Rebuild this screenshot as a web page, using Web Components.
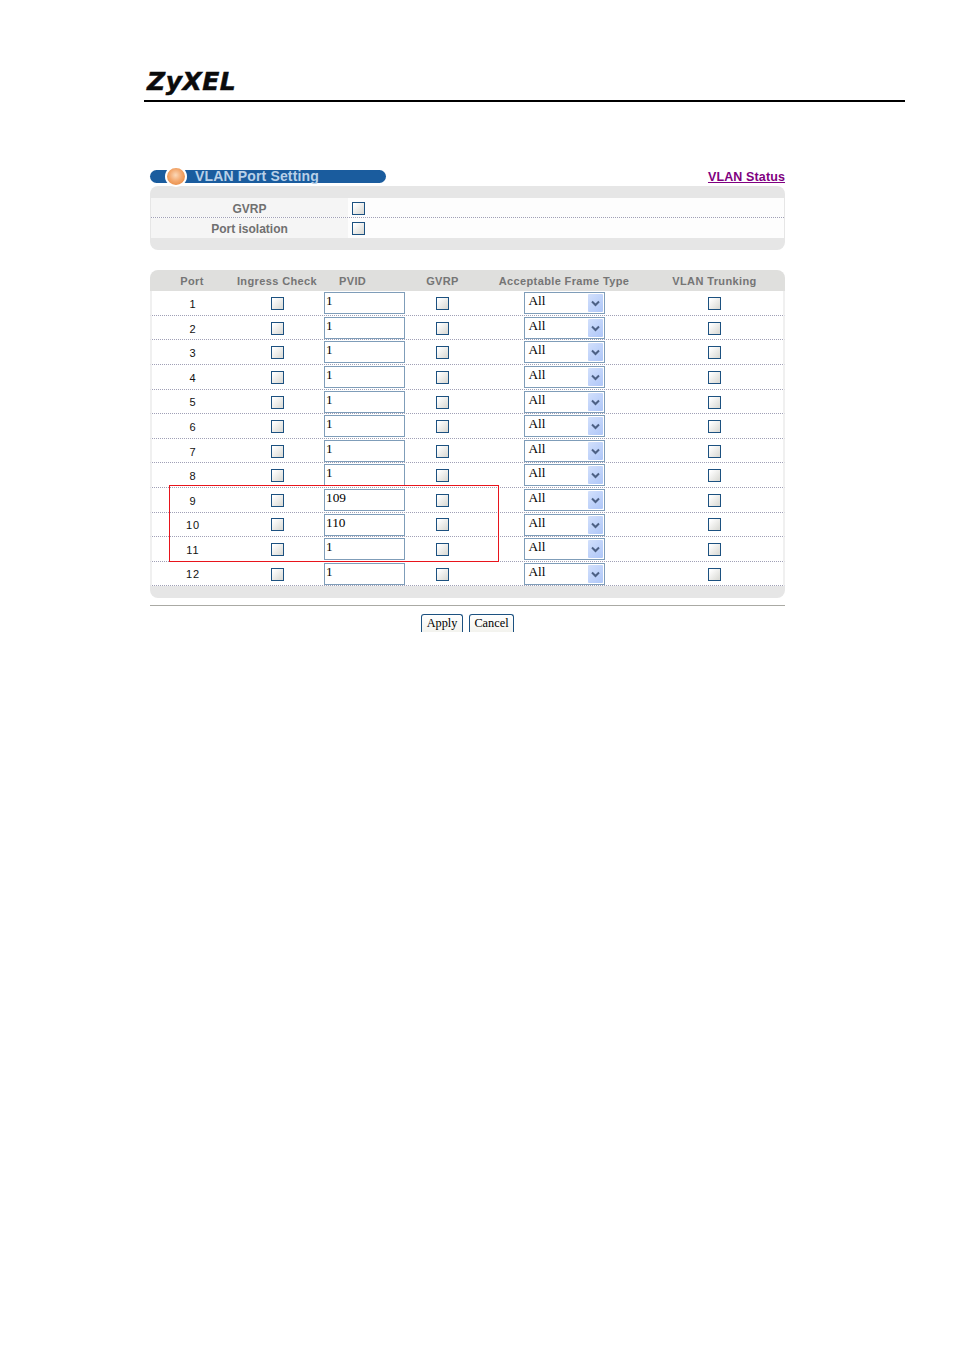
<!DOCTYPE html>
<html lang="en"><head><meta charset="utf-8"><title>VLAN Port Setting</title>
<style>
html,body{margin:0;padding:0;background:#fff}
body{width:954px;height:1350px;overflow:hidden;font-family:"Liberation Sans",Arial,sans-serif}
</style></head><body>
<zy-page>
  <zy-header slot="header"></zy-header>
  <zy-titlebar slot="title" label="VLAN Port Setting" link="VLAN Status"></zy-titlebar>
  <zy-global-panel slot="global">
    <zy-global-row label="GVRP" line></zy-global-row>
    <zy-global-row label="Port isolation"></zy-global-row>
  </zy-global-panel>
  <zy-port-table slot="table">
    <zy-port-row port="1" pvid="1" h="25"></zy-port-row>
    <zy-port-row port="2" pvid="1" h="24"></zy-port-row>
    <zy-port-row port="3" pvid="1" h="25"></zy-port-row>
    <zy-port-row port="4" pvid="1" h="25"></zy-port-row>
    <zy-port-row port="5" pvid="1" h="24" tight></zy-port-row>
    <zy-port-row port="6" pvid="1" h="25"></zy-port-row>
    <zy-port-row port="7" pvid="1" h="24"></zy-port-row>
    <zy-port-row port="8" pvid="1" h="25"></zy-port-row>
    <zy-port-row port="9" pvid="109" h="25"></zy-port-row>
    <zy-port-row port="10" pvid="110" h="24" tight></zy-port-row>
    <zy-port-row port="11" pvid="1" h="25"></zy-port-row>
    <zy-port-row port="12" pvid="1" h="24" tight></zy-port-row>
    <zy-highlight slot="overlay"></zy-highlight>
  </zy-port-table>
  <zy-actions slot="actions"></zy-actions>
</zy-page>
<script>
const define=(name,css,html,init)=>{
  customElements.define(name,class extends HTMLElement{
    connectedCallback(){
      if(this.shadowRoot)return;
      const r=this.attachShadow({mode:'open'});
      r.innerHTML=`<style>${css}</style>`+(typeof html==='function'?html(this):html);
      if(init)init(this);
    }
  });
};
define('zy-page',`:host{display:block;width:954px;height:1350px;box-sizing:border-box;padding-top:64px}
.body{margin-left:150px;width:635px;display:block}
::slotted([slot=title]){margin-top:68px}
::slotted([slot=table]){margin-top:20px}`,
`<slot name="header"></slot><div class="body"><slot name="title"></slot><slot name="global"></slot><slot name="table"></slot><slot name="actions"></slot></div>`);

define('zy-header',`:host{display:block;margin-left:144px;width:761px;height:36px;border-bottom:2px solid #000;box-sizing:content-box}
.logo{display:block;font:italic bold 25px/36px "DejaVu Sans",sans-serif;color:#0b0b0b;margin-left:3px;-webkit-text-stroke:.5px #0b0b0b;letter-spacing:.5px}`,
`<span class="logo">ZyXEL</span>`);

define('zy-titlebar',`:host{display:flex;justify-content:space-between;align-items:flex-start;height:16px}
.bar{position:relative;width:236px;height:13px;background:#1a5c9e;border-radius:7px;display:flex;align-items:center;box-sizing:border-box;padding-left:45px}
.orb{position:absolute;left:15px;top:-4px;width:18px;height:17px;border-radius:50%;background:radial-gradient(circle at 48% 42%,#fbd8b8 0%,#f3a86e 45%,#e27c2e 100%);border:2px solid #fff;box-sizing:content-box}
.t{font:bold 14px/13px "Liberation Sans",sans-serif;letter-spacing:.15px;color:#b8d0e8;white-space:nowrap}
a{font:bold 12.5px/14px "Liberation Sans",sans-serif;color:#800080;text-decoration:underline;white-space:nowrap;letter-spacing:.12px}`,
h=>`<div class="bar"><span class="orb"></span><span class="t">${h.getAttribute('label')}</span></div><a href="#">${h.getAttribute('link')}</a>`);

define('zy-check',`:host{display:block;width:13px;height:13px;box-sizing:border-box;border:1px solid #1c5180;background:linear-gradient(135deg,#fff 10%,#dcdcd7 90%)}`,``);

define('zy-global-panel',`:host{display:block;width:635px;border-radius:8px;overflow:hidden;background:#e6e6e6;padding:12px 0}
.in{display:block;margin:0 1px 0 1px}`,`<div class="in"><slot></slot></div>`);

define('zy-global-row',`:host{display:flex;background:#fdfdfd;height:20px;box-sizing:border-box;font:bold 12px/20px "Liberation Sans",sans-serif;color:#707070}
:host([line]){border-bottom:1px dotted #a0a0b6}
.l{width:197px;background:#f5f5f5;text-align:center;flex:none}
.l span{display:block;padding-top:1px}
.c{padding:4px 0 0 4px}`,
h=>`<div class="l"><span>${h.getAttribute('label')}</span></div><div class="c"><zy-check></zy-check></div>`);

const cols='82px 86px 85px 75px 168px 133px';
const headCols='84px 86px 85px 75px 168px 133px';
define('zy-port-table',`:host{display:block;position:relative;width:635px}
.head{display:grid;grid-template-columns:${headCols};height:21px;background:#dfdfdd;border-radius:8px 8px 0 0;font:bold 11px/22px "Liberation Sans",sans-serif;letter-spacing:.38px;color:#757575;text-align:center}
.head div{white-space:nowrap}
.head .pv{text-align:left;padding-left:19px}
.foot{height:12px;background:#e6e6e6;border-radius:0 0 8px 8px}
.rows{display:block}`,
`<div class="head"><div>Port</div><div>Ingress Check</div><div class="pv">PVID</div><div>GVRP</div><div>Acceptable Frame Type</div><div>VLAN Trunking</div></div><div class="rows"><slot></slot></div><div class="foot"></div><slot name="overlay"></slot>`);

define('zy-port-row',`:host{display:grid;grid-template-columns:${cols};align-items:start;box-sizing:border-box;width:635px;border-left:2px solid #f0f0f0;border-right:2px solid #f0f0f0;border-bottom:1px dotted #a0a0b6;font:11px/16px "Liberation Sans",sans-serif;color:#111;letter-spacing:1px}
.p{text-align:center;padding-top:5px}
:host([tight]) .p{padding-top:4px}
.cb{display:flex;justify-content:center;padding-top:6px}
:host([port="10"]) .cb{padding-top:5px}
.in{padding-top:1px;padding-left:4px}
.sel{display:flex;justify-content:center;padding-top:1px}
.box{box-sizing:border-box;width:81px;height:22px;border:1px solid #7f9db9;background:#fff;font:13.3px/16px "Liberation Serif",serif;letter-spacing:0;color:#000;padding-left:1px}
.s{display:flex;justify-content:space-between;padding-left:4px}
.s b{font-weight:400}
.btn{width:15px;height:18px;margin:1px 1px 0 0;background:linear-gradient(135deg,#d2e0fc,#aec6f8);border-radius:1px;display:flex;align-items:center;justify-content:center}`,
h=>`<div class="p">${h.getAttribute('port')}</div><div class="cb"><zy-check></zy-check></div><div class="in"><div class="box">${h.getAttribute('pvid')}</div></div><div class="cb"><zy-check></zy-check></div><div class="sel"><div class="box s"><b>All</b><span class="btn"><svg width="9" height="7" viewBox="0 0 9 7"><path d="M1 1.5L4.5 5L8 1.5" fill="none" stroke="#4d6185" stroke-width="2"/></svg></span></div></div><div class="cb"><zy-check></zy-check></div>`,
h=>{h.style.height=h.getAttribute('h')+'px'});

define('zy-highlight',`:host{display:block;position:absolute;left:19px;top:215px;width:330px;height:77px;box-sizing:border-box;border:1px solid #e8141c;pointer-events:none}`,``);

define('zy-actions',`:host{display:flex;justify-content:center;border-top:1px solid #aaaaa4;margin-top:7px;padding-top:8px;width:635px;box-sizing:border-box}
.bt{box-sizing:border-box;height:18px;border:1px solid #1c5180;border-bottom:0;border-radius:3px 3px 0 0;background:linear-gradient(#fff,#f3f3ee);font:12.3px/16px "Liberation Serif",serif;color:#000;text-align:center}
.a{width:42px}.c{width:45px}
.wrap{display:flex;gap:6px}`,
`<div class="wrap"><div class="bt a">Apply</div><div class="bt c">Cancel</div></div>`);
</script>
</body></html>
